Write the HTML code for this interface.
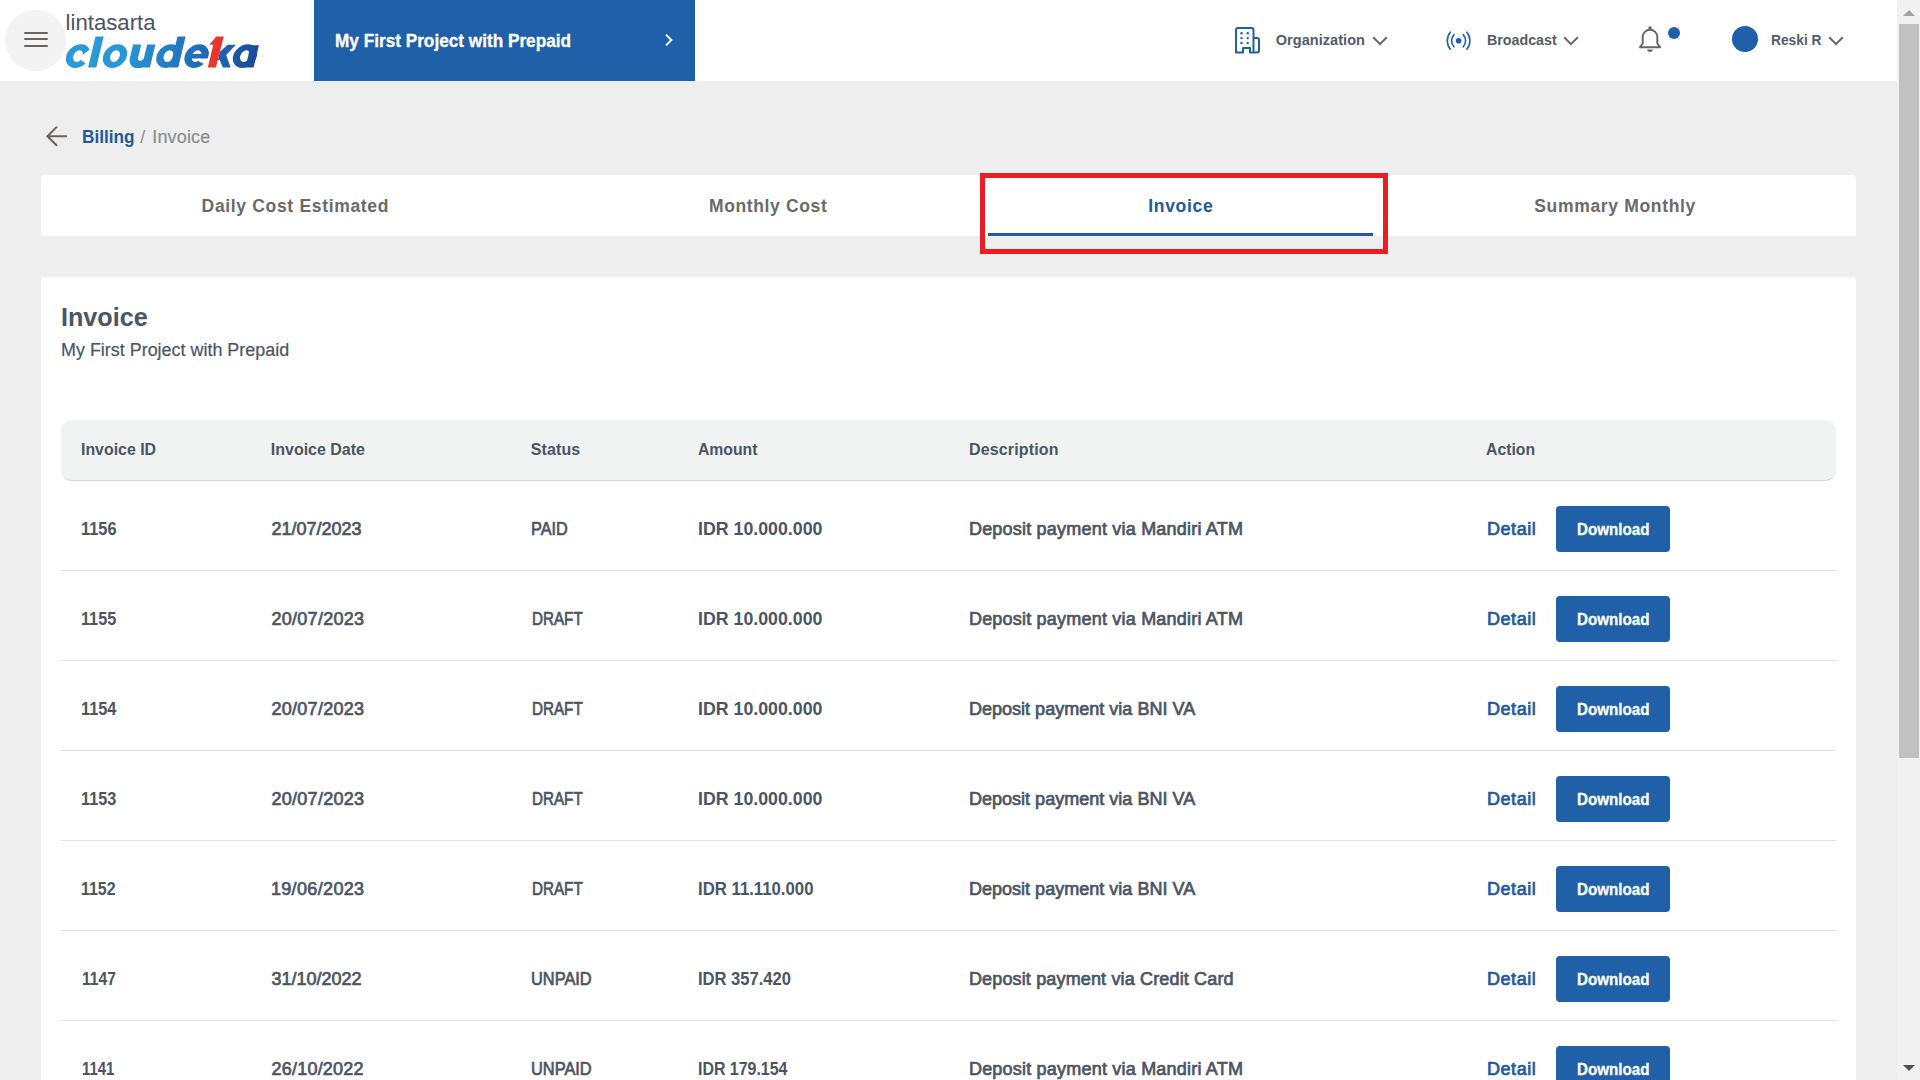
<!DOCTYPE html>
<html lang="en">
<head>
<meta charset="utf-8">
<title>Invoice - Cloudeka</title>
<style>
*{box-sizing:border-box;margin:0;padding:0}
html,body{width:1920px;height:1080px;overflow:hidden;background:#eeeeee;font-family:"Liberation Sans",sans-serif;color:#4b5565}
body{position:relative}
.abs{position:absolute}
.t{position:absolute;white-space:nowrap;line-height:1;transform-origin:0 0}
#header{position:absolute;left:0;top:0;width:1897px;height:81px;background:#fff}
#burger{position:absolute;left:5px;top:10px;width:61px;height:61px;border-radius:50%;background:#f3f3f3}
#burger i{position:absolute;left:19px;width:24px;height:2px;background:#686360;border-radius:1px}
#proj{position:absolute;left:314px;top:0;width:381px;height:81px;background:#2060a8}
.hb{font-weight:bold;font-size:15px;color:#505b6b}
#tabs{position:absolute;left:41px;top:175px;width:1815px;height:61px;background:#fff;border-radius:4px 4px 0 0}
.tab{font-weight:bold;font-size:17px;color:#6b6b6b}
#card{position:absolute;left:41px;top:277px;width:1815px;height:900px;background:#fff;border-radius:4px}
#thead{position:absolute;left:61px;top:420px;width:1775px;height:61px;background:#f1f2f2;border-radius:11px;border-bottom:1px solid #d6d9da}
.th{font-weight:bold;font-size:16px;color:#4b5565}
.td{font-size:17.5px;color:#4b5565;font-weight:bold}
.sep{position:absolute;left:61px;width:1775px;height:1px;background:#e2e2e2}
.btn{position:absolute;left:1556px;width:114px;height:45.75px;background:#2060a8;border-radius:4px}
.btn span{position:absolute;left:21px;top:15px;font-weight:bold;font-size:16px;color:#fff;line-height:1;white-space:nowrap}
.det{color:#23589c}
#sb{position:absolute;left:1897px;top:0;width:23px;height:1080px;background:#f1f1f1}
#sbt{position:absolute;left:2px;top:24px;width:20px;height:734px;background:#c1c1c1}
#hl{position:absolute;left:980px;top:173px;width:408px;height:81px;border:5px solid #ec1c24}
</style>
</head>
<body>

<!-- HEADER -->
<div id="header">
  <div id="burger"><i style="top:22px"></i><i style="top:28px"></i><i style="top:35px"></i></div>
  <svg class="abs" style="left:60px;top:8px" width="205" height="66" viewBox="60 8 205 66">
    <defs>
      <linearGradient id="lg" gradientUnits="userSpaceOnUse" x1="64" y1="0" x2="256" y2="0">
        <stop offset="0" stop-color="#2a9bd9"/>
        <stop offset="0.3" stop-color="#2896d6"/>
        <stop offset="0.5" stop-color="#2381c8"/>
        <stop offset="0.72" stop-color="#1f68b4"/>
        <stop offset="1" stop-color="#1b4a99"/>
      </linearGradient>
    </defs>
    <text x="65.6" y="30" font-family="Liberation Sans, sans-serif" font-size="22" fill="#4a5563" textLength="90" lengthAdjust="spacingAndGlyphs">lintasarta</text>
    <g transform="translate(16.2 0) skewX(-13.5)" fill="url(#lg)">
      <path fill-rule="evenodd" d="M63.50 56.1 a11.86 11.9 0 1 0 23.72 0 a11.86 11.9 0 1 0 -23.72 0 Z M70.56 56.1 a4.8 5.8 0 1 0 9.60 0 a4.8 5.8 0 1 0 -9.60 0 Z"/>
      <path fill="#fff" d="M77.86 56.40 L88.36 46.70 L88.36 65.85 L79.96 60.60 L77.86 59.10 Z"/>
      <rect x="88.1" y="36.6" width="8.2" height="30.9"/>
      <path fill-rule="evenodd" d="M100.40 56.1 a11.86 11.9 0 1 0 23.72 0 a11.86 11.9 0 1 0 -23.72 0 Z M107.46 56.1 a4.8 5.8 0 1 0 9.60 0 a4.8 5.8 0 1 0 -9.60 0 Z"/>
      <path d="M127.6 44.6 V57.2 C127.6 64.4 132 68 138 68 C141 68 142.6 67.5 143.5 67.5 H149.9 V44.6 H141.7 V57.6 A2.98 3.4 0 0 1 135.75 57.6 V44.6 Z"/>
      <path fill-rule="evenodd" d="M153.84 56.1 a11.86 11.9 0 1 0 23.72 0 a11.86 11.9 0 1 0 -23.72 0 Z M160.90 56.1 a4.8 5.8 0 1 0 9.60 0 a4.8 5.8 0 1 0 -9.60 0 Z"/>
      <rect x="170.1" y="36.6" width="8.1" height="30.9"/>
      <path fill-rule="evenodd" d="M182.00 56.1 a11.86 11.9 0 1 0 23.72 0 a11.86 11.9 0 1 0 -23.72 0 Z M189.06 56.1 a4.8 5.8 0 1 0 9.60 0 a4.8 5.8 0 1 0 -9.60 0 Z"/>
      <rect x="188.36" y="54" width="13" height="4.4"/>
      <path fill="#fff" d="M196.86 58.40 L206.86 58.40 L206.86 65.70 L198.66 61.90 L196.86 61.10 Z"/>
      <path fill-rule="evenodd" d="M230.44 56.1 a11.86 11.9 0 1 0 23.72 0 a11.86 11.9 0 1 0 -23.72 0 Z M237.50 56.1 a4.8 5.8 0 1 0 9.60 0 a4.8 5.8 0 1 0 -9.60 0 Z"/>
      <rect x="245.4" y="45.2" width="8.2" height="22.3"/>
    </g>
    <path d="M219.9 51.8 L227.8 44.7 L235.9 44.7 L226.2 55 L230.6 67.5 L222.8 67.5 L219.5 59.5 L217.6 61 Z" fill="#1f5fae"/>
    <path d="M207.8 67.5 L215.9 67.5 L223.75 36.6 L216.25 36.6 L209.4 44.7 L213.3 44.7 Z" fill="#e8352e"/>
  </svg>
  <div id="proj">
    <svg class="abs" style="left:349px;top:32px" width="12" height="16" viewBox="0 0 12 16"><path d="M3 2.6 L8.4 8 L3 13.4" fill="none" stroke="#fff" stroke-width="2"/></svg>
  </div>

  <!-- organization icon -->
  <svg class="abs" style="left:1233px;top:25px" width="30" height="31" viewBox="1233 25 30 31">
    <g fill="none" stroke="#2060a8" stroke-width="2" stroke-linejoin="round">
      <path d="M1236 52.5 V30 a2 2 0 0 1 2 -2 h13.5 a2 2 0 0 1 2 2 V38 h3.5 a2 2 0 0 1 2 2 V50.5 a2 2 0 0 1 -2 2 H1250 V48 H1243 V52.5 Z"/>
      <path d="M1253.5 38 V52"/>
    </g>
    <g fill="#2060a8">
      <circle cx="1241.5" cy="33.2" r="1.2"/><circle cx="1247.7" cy="33.2" r="1.2"/>
      <circle cx="1241.5" cy="38.1" r="1.2"/><circle cx="1247.7" cy="38.1" r="1.2"/>
      <circle cx="1241.5" cy="43" r="1.2"/><circle cx="1247.7" cy="43" r="1.2"/>
    </g>
  </svg>
  <svg class="abs" style="left:1371px;top:34px" width="18" height="14" viewBox="0 0 18 14"><path d="M2.2 3.3 L9 10.1 L15.8 3.3" fill="none" stroke="#666" stroke-width="2"/></svg>

  <!-- broadcast icon -->
  <svg class="abs" style="left:1443px;top:28px" width="31" height="26" viewBox="1443 28 31 26">
    <circle cx="1458.6" cy="40.7" r="2.8" fill="#2060a8"/>
    <g fill="none" stroke="#2060a8" stroke-width="1.6" stroke-linecap="round">
      <path d="M1454 34.6 A9 9 0 0 0 1454 46.8"/>
      <path d="M1463.2 34.6 A9 9 0 0 1 1463.2 46.8"/>
      <path d="M1450.3 32.2 A13.5 13.5 0 0 0 1450.3 49.2"/>
      <path d="M1466.9 32.2 A13.5 13.5 0 0 1 1466.9 49.2"/>
    </g>
  </svg>
  <svg class="abs" style="left:1562px;top:34px" width="18" height="14" viewBox="0 0 18 14"><path d="M2.2 3.3 L9 10.1 L15.8 3.3" fill="none" stroke="#666" stroke-width="2"/></svg>

  <!-- bell -->
  <svg class="abs" style="left:1636px;top:24px" width="28" height="30" viewBox="1636 24 28 30">
    <g fill="none" stroke="#6a6664" stroke-width="2" stroke-linejoin="round" stroke-linecap="round">
      <path d="M1640 47.2 H1660 L1657.3 43.5 V37 a7.3 7.3 0 0 0 -14.6 0 V43.5 Z"/>
    </g>
    <circle cx="1650" cy="28" r="1.8" fill="#6a6664"/>
    <path d="M1647.2 49.6 H1652.8 A2.8 2.4 0 0 1 1647.2 49.6 Z" fill="#6a6664"/>
  </svg>
  <div class="abs" style="left:1668px;top:26.5px;width:12px;height:12px;border-radius:50%;background:#2060a8"></div>

  <div class="abs" style="left:1732px;top:26px;width:26px;height:26px;border-radius:50%;background:#2060a8"></div>
  <svg class="abs" style="left:1827px;top:34px" width="18" height="14" viewBox="0 0 18 14"><path d="M2.2 3.3 L9 10.1 L15.8 3.3" fill="none" stroke="#666" stroke-width="2"/></svg>
</div>

<!-- BREADCRUMB -->
<svg class="abs" style="left:44px;top:124px" width="26" height="25" viewBox="44 124 26 25"><path d="M66.9 136.2 H47.5 M57 126.6 L47.4 136.2 L57 145.8" fill="none" stroke="#686360" stroke-width="2"/></svg>

<!-- TABS -->
<div id="tabs">
  <div class="abs" style="left:947px;top:58px;width:385px;height:3px;background:#22589e"></div>
</div>

<!-- CARD -->
<div id="card"></div>

<div id="thead"></div>

<!-- ROWS -->
<div class="btn" style="top:506.25px"></div>
<div class="sep" style="top:570px"></div>
<div class="btn" style="top:596.25px"></div>
<div class="sep" style="top:660px"></div>
<div class="btn" style="top:686.25px"></div>
<div class="sep" style="top:750px"></div>
<div class="btn" style="top:776.25px"></div>
<div class="sep" style="top:840px"></div>
<div class="btn" style="top:866.25px"></div>
<div class="sep" style="top:930px"></div>
<div class="btn" style="top:956.25px"></div>
<div class="sep" style="top:1020px"></div>
<div class="btn" style="top:1046.25px"></div>
<div class="t" id="pj" style="left:335.06px;top:31.76px;font-size:18px;color:#ffffff;font-weight:bold;-webkit-text-stroke:0.3px currentColor;transform:scaleX(0.9554);">My First Project with Prepaid</div>
<div class="t" id="h1" style="left:1275.74px;top:33.23px;font-size:14.5px;color:#525c6b;font-weight:bold;letter-spacing:0.057px;">Organization</div>
<div class="t" id="h2" style="left:1486.75px;top:33.23px;font-size:14.5px;color:#525c6b;font-weight:bold;transform:scaleX(0.9825);">Broadcast</div>
<div class="t" id="h3" style="left:1770.67px;top:33.23px;font-size:14.5px;color:#525c6b;font-weight:bold;transform:scaleX(0.9493);">Reski R</div>
<div class="t" id="b1" style="left:81.55px;top:127.51px;font-size:18px;color:#22589e;font-weight:bold;transform:scaleX(0.9563);">Billing</div>
<div class="t" id="b2" style="left:140.15px;top:127.51px;font-size:18px;color:#8c8c8c;">/</div>
<div class="t" id="b3" style="left:152.22px;top:127.51px;font-size:18px;color:#8c8c8c;-webkit-text-stroke:0.2px currentColor;letter-spacing:0.176px;">Invoice</div>
<div class="t" id="t1" style="left:201.60px;top:197.69px;font-size:17.5px;color:#6a6a6a;font-weight:bold;letter-spacing:0.669px;">Daily Cost Estimated</div>
<div class="t" id="t2" style="left:708.96px;top:197.69px;font-size:17.5px;color:#6a6a6a;font-weight:bold;letter-spacing:0.638px;">Monthly Cost</div>
<div class="t" id="t3" style="left:1148.25px;top:197.69px;font-size:17.5px;color:#22589e;font-weight:bold;letter-spacing:0.687px;">Invoice</div>
<div class="t" id="t4" style="left:1534.25px;top:197.69px;font-size:17.5px;color:#6a6a6a;font-weight:bold;letter-spacing:0.666px;">Summary Monthly</div>
<div class="t" id="c1" style="left:61.03px;top:303.57px;font-size:26.5px;color:#4b5565;font-weight:bold;transform:scaleX(0.9492);">Invoice</div>
<div class="t" id="c2" style="left:61.49px;top:341.26px;font-size:18px;color:#4b5565;-webkit-text-stroke:0.2px currentColor;transform:scaleX(0.9961);">My First Project with Prepaid</div>
<div class="t" id="th1" style="left:81.00px;top:442.46px;font-size:16px;color:#4b5565;font-weight:bold;transform:scaleX(0.9927);">Invoice ID</div>
<div class="t" id="th2" style="left:270.81px;top:442.46px;font-size:16px;color:#4b5565;font-weight:bold;letter-spacing:-0.012px;">Invoice Date</div>
<div class="t" id="th3" style="left:530.77px;top:442.46px;font-size:16px;color:#4b5565;font-weight:bold;letter-spacing:0.103px;">Status</div>
<div class="t" id="th4" style="left:698.46px;top:442.46px;font-size:16px;color:#4b5565;font-weight:bold;transform:scaleX(0.9838);">Amount</div>
<div class="t" id="th5" style="left:969.03px;top:442.46px;font-size:16px;color:#4b5565;font-weight:bold;letter-spacing:0.144px;">Description</div>
<div class="t" id="th6" style="left:1486.34px;top:442.46px;font-size:16px;color:#4b5565;font-weight:bold;transform:scaleX(0.9873);">Action</div>
<div class="t" id="r0a" style="left:80.92px;top:519.76px;font-size:18px;color:#4b5565;font-weight:bold;transform:scaleX(0.9096);">1156</div>
<div class="t" id="r0b" style="left:271.44px;top:519.76px;font-size:18px;color:#4b5565;-webkit-text-stroke:0.7px currentColor;letter-spacing:-0.006px;">21/07/2023</div>
<div class="t" id="r0c" style="left:531.40px;top:519.76px;font-size:18px;color:#4b5565;-webkit-text-stroke:0.7px currentColor;transform:scaleX(0.9033);">PAID</div>
<div class="t" id="r0d" style="left:697.79px;top:519.76px;font-size:18px;color:#4b5565;font-weight:bold;transform:scaleX(0.9865);">IDR 10.000.000</div>
<div class="t" id="r0e" style="left:968.95px;top:519.76px;font-size:18px;color:#4b5565;-webkit-text-stroke:0.7px currentColor;letter-spacing:0.206px;">Deposit payment via Mandiri ATM</div>
<div class="t" id="r0f" style="left:1486.96px;top:519.76px;font-size:18px;color:#22589e;-webkit-text-stroke:0.7px currentColor;letter-spacing:0.559px;">Detail</div>
<div class="t" id="r0g" style="left:1577.17px;top:522.46px;font-size:16px;color:#ffffff;font-weight:bold;-webkit-text-stroke:0.3px currentColor;transform:scaleX(0.9476);">Download</div>
<div class="t" id="r1a" style="left:80.92px;top:609.76px;font-size:18px;color:#4b5565;font-weight:bold;transform:scaleX(0.9004);">1155</div>
<div class="t" id="r1b" style="left:271.44px;top:609.76px;font-size:18px;color:#4b5565;-webkit-text-stroke:0.7px currentColor;letter-spacing:0.288px;">20/07/2023</div>
<div class="t" id="r1c" style="left:531.60px;top:609.76px;font-size:18px;color:#4b5565;-webkit-text-stroke:0.7px currentColor;transform:scaleX(0.8452);">DRAFT</div>
<div class="t" id="r1d" style="left:697.79px;top:609.76px;font-size:18px;color:#4b5565;font-weight:bold;transform:scaleX(0.9865);">IDR 10.000.000</div>
<div class="t" id="r1e" style="left:968.95px;top:609.76px;font-size:18px;color:#4b5565;-webkit-text-stroke:0.7px currentColor;letter-spacing:0.206px;">Deposit payment via Mandiri ATM</div>
<div class="t" id="r1f" style="left:1486.96px;top:609.76px;font-size:18px;color:#22589e;-webkit-text-stroke:0.7px currentColor;letter-spacing:0.559px;">Detail</div>
<div class="t" id="r1g" style="left:1577.17px;top:612.46px;font-size:16px;color:#ffffff;font-weight:bold;-webkit-text-stroke:0.3px currentColor;transform:scaleX(0.9476);">Download</div>
<div class="t" id="r2a" style="left:80.92px;top:699.76px;font-size:18px;color:#4b5565;font-weight:bold;transform:scaleX(0.9065);">1154</div>
<div class="t" id="r2b" style="left:271.44px;top:699.76px;font-size:18px;color:#4b5565;-webkit-text-stroke:0.7px currentColor;letter-spacing:0.288px;">20/07/2023</div>
<div class="t" id="r2c" style="left:531.60px;top:699.76px;font-size:18px;color:#4b5565;-webkit-text-stroke:0.7px currentColor;transform:scaleX(0.8452);">DRAFT</div>
<div class="t" id="r2d" style="left:697.79px;top:699.76px;font-size:18px;color:#4b5565;font-weight:bold;transform:scaleX(0.9865);">IDR 10.000.000</div>
<div class="t" id="r2e" style="left:968.95px;top:699.76px;font-size:18px;color:#4b5565;-webkit-text-stroke:0.7px currentColor;letter-spacing:0.019px;">Deposit payment via BNI VA</div>
<div class="t" id="r2f" style="left:1486.96px;top:699.76px;font-size:18px;color:#22589e;-webkit-text-stroke:0.7px currentColor;letter-spacing:0.559px;">Detail</div>
<div class="t" id="r2g" style="left:1577.17px;top:702.46px;font-size:16px;color:#ffffff;font-weight:bold;-webkit-text-stroke:0.3px currentColor;transform:scaleX(0.9476);">Download</div>
<div class="t" id="r3a" style="left:80.92px;top:789.76px;font-size:18px;color:#4b5565;font-weight:bold;transform:scaleX(0.9020);">1153</div>
<div class="t" id="r3b" style="left:271.44px;top:789.76px;font-size:18px;color:#4b5565;-webkit-text-stroke:0.7px currentColor;letter-spacing:0.288px;">20/07/2023</div>
<div class="t" id="r3c" style="left:531.60px;top:789.76px;font-size:18px;color:#4b5565;-webkit-text-stroke:0.7px currentColor;transform:scaleX(0.8452);">DRAFT</div>
<div class="t" id="r3d" style="left:697.79px;top:789.76px;font-size:18px;color:#4b5565;font-weight:bold;transform:scaleX(0.9865);">IDR 10.000.000</div>
<div class="t" id="r3e" style="left:968.95px;top:789.76px;font-size:18px;color:#4b5565;-webkit-text-stroke:0.7px currentColor;letter-spacing:0.019px;">Deposit payment via BNI VA</div>
<div class="t" id="r3f" style="left:1486.96px;top:789.76px;font-size:18px;color:#22589e;-webkit-text-stroke:0.7px currentColor;letter-spacing:0.559px;">Detail</div>
<div class="t" id="r3g" style="left:1577.17px;top:792.46px;font-size:16px;color:#ffffff;font-weight:bold;-webkit-text-stroke:0.3px currentColor;transform:scaleX(0.9476);">Download</div>
<div class="t" id="r4a" style="left:80.96px;top:879.76px;font-size:18px;color:#4b5565;font-weight:bold;transform:scaleX(0.8838);">1152</div>
<div class="t" id="r4b" style="left:270.88px;top:879.76px;font-size:18px;color:#4b5565;-webkit-text-stroke:0.7px currentColor;letter-spacing:0.351px;">19/06/2023</div>
<div class="t" id="r4c" style="left:531.60px;top:879.76px;font-size:18px;color:#4b5565;-webkit-text-stroke:0.7px currentColor;transform:scaleX(0.8452);">DRAFT</div>
<div class="t" id="r4d" style="left:697.88px;top:879.76px;font-size:18px;color:#4b5565;font-weight:bold;transform:scaleX(0.9302);">IDR 11.110.000</div>
<div class="t" id="r4e" style="left:968.95px;top:879.76px;font-size:18px;color:#4b5565;-webkit-text-stroke:0.7px currentColor;letter-spacing:0.019px;">Deposit payment via BNI VA</div>
<div class="t" id="r4f" style="left:1486.96px;top:879.76px;font-size:18px;color:#22589e;-webkit-text-stroke:0.7px currentColor;letter-spacing:0.559px;">Detail</div>
<div class="t" id="r4g" style="left:1577.17px;top:882.46px;font-size:16px;color:#ffffff;font-weight:bold;-webkit-text-stroke:0.3px currentColor;transform:scaleX(0.9476);">Download</div>
<div class="t" id="r5a" style="left:81.79px;top:969.76px;font-size:18px;color:#4b5565;font-weight:bold;transform:scaleX(0.8673);">1147</div>
<div class="t" id="r5b" style="left:271.42px;top:969.76px;font-size:18px;color:#4b5565;-webkit-text-stroke:0.7px currentColor;letter-spacing:0.012px;">31/10/2022</div>
<div class="t" id="r5c" style="left:530.71px;top:969.76px;font-size:18px;color:#4b5565;-webkit-text-stroke:0.7px currentColor;transform:scaleX(0.9103);">UNPAID</div>
<div class="t" id="r5d" style="left:697.92px;top:969.76px;font-size:18px;color:#4b5565;font-weight:bold;transform:scaleX(0.9198);">IDR 357.420</div>
<div class="t" id="r5e" style="left:968.95px;top:969.76px;font-size:18px;color:#4b5565;-webkit-text-stroke:0.7px currentColor;letter-spacing:0.150px;">Deposit payment via Credit Card</div>
<div class="t" id="r5f" style="left:1486.96px;top:969.76px;font-size:18px;color:#22589e;-webkit-text-stroke:0.7px currentColor;letter-spacing:0.559px;">Detail</div>
<div class="t" id="r5g" style="left:1577.17px;top:972.46px;font-size:16px;color:#ffffff;font-weight:bold;-webkit-text-stroke:0.3px currentColor;transform:scaleX(0.9476);">Download</div>
<div class="t" id="r6a" style="left:81.88px;top:1059.76px;font-size:18px;color:#4b5565;font-weight:bold;transform:scaleX(0.8277);">1141</div>
<div class="t" id="r6b" style="left:271.44px;top:1059.76px;font-size:18px;color:#4b5565;-webkit-text-stroke:0.7px currentColor;letter-spacing:0.231px;">26/10/2022</div>
<div class="t" id="r6c" style="left:530.71px;top:1059.76px;font-size:18px;color:#4b5565;-webkit-text-stroke:0.7px currentColor;transform:scaleX(0.9103);">UNPAID</div>
<div class="t" id="r6d" style="left:697.99px;top:1059.76px;font-size:18px;color:#4b5565;font-weight:bold;transform:scaleX(0.8844);">IDR 179.154</div>
<div class="t" id="r6e" style="left:968.95px;top:1059.76px;font-size:18px;color:#4b5565;-webkit-text-stroke:0.7px currentColor;letter-spacing:0.206px;">Deposit payment via Mandiri ATM</div>
<div class="t" id="r6f" style="left:1486.96px;top:1059.76px;font-size:18px;color:#22589e;-webkit-text-stroke:0.7px currentColor;letter-spacing:0.559px;">Detail</div>
<div class="t" id="r6g" style="left:1577.17px;top:1062.46px;font-size:16px;color:#ffffff;font-weight:bold;-webkit-text-stroke:0.3px currentColor;transform:scaleX(0.9476);">Download</div>

<div id="hl"></div>
<div id="sb">
  <svg class="abs" style="left:5px;top:9px" width="14" height="8" viewBox="0 0 14 8"><path d="M1 7 L7 1 L13 7 Z" fill="#a3a3a3"/></svg>
  <div id="sbt"></div>
  <svg class="abs" style="left:5px;top:1064px" width="14" height="8" viewBox="0 0 14 8"><path d="M1 1 L7 7 L13 1 Z" fill="#505050"/></svg>
</div>
</body>
</html>
